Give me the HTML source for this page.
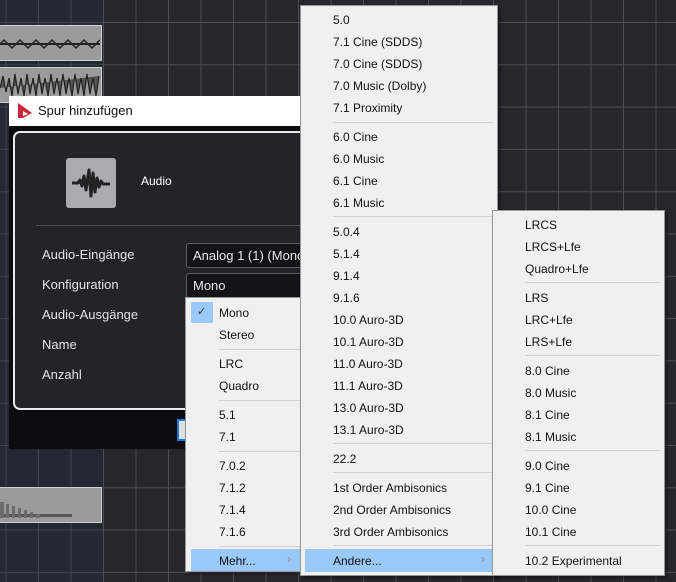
<!DOCTYPE html>
<html><head><meta charset="utf-8"><style>
*{margin:0;padding:0;box-sizing:border-box}
body{width:676px;height:582px;overflow:hidden;position:relative;font-family:"Liberation Sans",sans-serif;font-size:12px;
background-color:#25272b;
background-image:linear-gradient(90deg,#4a4e56 1px,transparent 1px),linear-gradient(180deg,#4a4e56 1px,transparent 1px);
background-size:32.5px 42.3px;background-position:5.5px 22px;}
.lb{position:absolute;left:0;top:0;width:102px;height:582px;background:rgba(30,45,70,.25)}
.clip{position:absolute;left:0;width:102px;height:36px;background:#9b9b9c;border:1px solid #cfcfcf;border-left:none}
.a{position:absolute}
.menu{position:absolute;background:#f0f0f0;border:1px solid #979797;box-shadow:2px 2px 3px rgba(0,0,0,.4);color:#111}
.it{position:absolute;left:0;right:0;height:22px;line-height:22px}
.sep{position:absolute;height:1px;background:#d0d0d0}
.hl{position:absolute;background:#99c9f7}
.lbl{position:absolute;left:42px;color:#e0e4ea;font-size:13px;line-height:16px}
</style></head><body>
<div class="lb"></div>
<div class="clip" style="top:25px"><div class="a" style="left:0;top:17px;width:100px;height:2px;background:#222"></div>
<svg class="a" style="left:0;top:12px" width="100" height="12"><path d="M0 6 L4 2 L8 6 L12 10 L16 6 L20 2 L24 6 L28 10 L32 6 L36 2 L40 6 L44 10 L48 6 L52 2 L56 6 L60 10 L64 6 L68 2 L72 6 L76 10 L80 6 L84 2 L88 6 L92 10 L96 6 L100 2" stroke="#222" fill="none" stroke-width="1.5"/></svg></div>
<div class="clip" style="top:67px"><svg class="a" style="left:0;top:2px" width="100" height="32"><path d="M0 18 L3 6 L6 22 L9 8 L12 26 L15 4 L18 24 L21 8 L24 26 L27 4 L30 24 L33 8 L36 26 L39 4 L42 24 L45 8 L48 26 L51 4 L54 24 L57 8 L60 26 L63 4 L66 24 L69 8 L72 26 L75 4 L78 24 L81 8 L84 26 L87 4 L90 24 L93 8 L96 26 L99 6" stroke="#222" fill="#555" stroke-width="1.2"/></svg></div>
<div class="clip" style="top:487px"><div class="a" style="left:0;top:26px;width:72px;height:3px;background:#555"></div>
<svg class="a" style="left:0;top:10px" width="60" height="20"><path d="M0 20 V4 H4 V20 M6 20 V6 H9 V20 M12 20 V8 H15 V20 M18 20 V10 H21 V20 M24 20 V12 H27 V20 M30 20 V14 H33 V20 M36 20 V16 H40 V20" fill="#6c6c6c"/></svg></div>

<!-- dialog -->
<div class="a" style="left:9px;top:96px;width:300px;height:30px;background:#fff"></div>
<svg class="a" style="left:17px;top:102px" width="16" height="17"><path d="M1 1 L15 11 L6 16 L1 16 Z" fill="#c8263a"/><path d="M6 9 L11 12 L6 14Z" fill="#fff"/></svg>
<div class="a" style="left:38px;top:103px;font-size:13px;color:#111">Spur hinzufügen</div>
<div class="a" style="left:9px;top:126px;width:300px;height:323px;background:#0b0c0e"></div>
<div class="a" style="left:13px;top:131px;width:300px;height:279px;background:#222429;border:2px solid #e9e9e9;border-radius:7px"></div>
<div class="a" style="left:66px;top:158px;width:50px;height:50px;background:#a9abae;border-radius:3px"></div>
<svg class="a" style="left:70px;top:168px" width="42" height="30"><path d="M2 15 H8 L10 12 L12 18 L14 8 L16 22 L19 2 L21 28 L23 5 L25 24 L27 10 L29 19 L31 13 L33 16 H40" stroke="#222" stroke-width="3" fill="none" stroke-linejoin="round"/></svg>
<div class="a" style="left:141px;top:174px;color:#fff;font-size:12px">Audio</div>
<div class="a" style="left:36px;top:225px;width:270px;height:1px;background:#4a4c50"></div>
<div class="lbl" style="top:247px">Audio-Eingänge</div>
<div class="lbl" style="top:277px">Konfiguration</div>
<div class="lbl" style="top:307px">Audio-Ausgänge</div>
<div class="lbl" style="top:337px">Name</div>
<div class="lbl" style="top:367px">Anzahl</div>
<div class="a" style="left:186px;top:243px;width:120px;height:25px;background:#131417;border:1px solid #5a5c60;border-radius:3px;color:#e8e8e8;font-size:13px;line-height:23px;padding-left:6px;white-space:nowrap;overflow:hidden">Analog 1 (1) (Mono</div>
<div class="a" style="left:186px;top:273px;width:120px;height:25px;background:#131417;border:1px solid #5a5c60;border-radius:3px;color:#e8e8e8;font-size:13px;line-height:23px;padding-left:6px">Mono</div>
<div class="a" style="left:177px;top:419px;width:12px;height:22px;border:2px solid #1e78d6;background:#e0e0e0"></div>

<!-- menu 1 -->
<div class="menu" style="left:185px;top:297px;width:116px;height:275px">
<div class="hl" style="left:5px;top:4px;width:22px;height:21px"></div>
<div class="a" style="left:11px;top:7px;font-size:11px;color:#333">✓</div>
<div class="hl" style="left:5px;top:251px;width:110px;height:22px"></div>
<div style="position:absolute;left:33px;top:0;right:0">
<div class="it" style="top:4px">Mono</div><div class="it" style="top:26px">Stereo</div>
<div class="sep" style="top:51px;left:0;width:82px"></div>
<div class="it" style="top:55px">LRC</div><div class="it" style="top:77px">Quadro</div>
<div class="sep" style="top:102px;left:0;width:82px"></div>
<div class="it" style="top:106px">5.1</div><div class="it" style="top:128px">7.1</div>
<div class="sep" style="top:153px;left:0;width:82px"></div>
<div class="it" style="top:157px">7.0.2</div><div class="it" style="top:179px">7.1.2</div><div class="it" style="top:201px">7.1.4</div><div class="it" style="top:223px">7.1.6</div>
<div class="sep" style="top:248px;left:0;width:82px"></div>
<div class="it" style="top:252px">Mehr...</div>
</div>
<div class="a" style="left:101px;top:254px;color:#888">›</div>
</div>

<!-- menu 2 -->
<div class="menu" style="left:300px;top:5px;width:198px;height:571px">
<div class="hl" style="left:4px;top:543px;width:189px;height:23px"></div>
<div style="position:absolute;left:32px;top:0;right:0">
<div class="it" style="top:3px">5.0</div><div class="it" style="top:25px">7.1 Cine (SDDS)</div><div class="it" style="top:47px">7.0 Cine (SDDS)</div><div class="it" style="top:69px">7.0 Music (Dolby)</div><div class="it" style="top:91px">7.1 Proximity</div>
<div class="sep" style="top:116px;left:0;width:160px"></div>
<div class="it" style="top:120px">6.0 Cine</div><div class="it" style="top:142px">6.0 Music</div><div class="it" style="top:164px">6.1 Cine</div><div class="it" style="top:186px">6.1 Music</div>
<div class="sep" style="top:210px;left:0;width:160px"></div>
<div class="it" style="top:215px">5.0.4</div><div class="it" style="top:237px">5.1.4</div><div class="it" style="top:259px">9.1.4</div><div class="it" style="top:281px">9.1.6</div><div class="it" style="top:303px">10.0 Auro-3D</div><div class="it" style="top:325px">10.1 Auro-3D</div><div class="it" style="top:347px">11.0 Auro-3D</div><div class="it" style="top:369px">11.1 Auro-3D</div><div class="it" style="top:391px">13.0 Auro-3D</div><div class="it" style="top:413px">13.1 Auro-3D</div>
<div class="sep" style="top:437px;left:0;width:160px"></div>
<div class="it" style="top:442px">22.2</div>
<div class="sep" style="top:466px;left:0;width:160px"></div>
<div class="it" style="top:471px">1st Order Ambisonics</div><div class="it" style="top:493px">2nd Order Ambisonics</div><div class="it" style="top:515px">3rd Order Ambisonics</div>
<div class="sep" style="top:539px;left:0;width:160px"></div>
<div class="it" style="top:544px">Andere...</div>
</div>
<div class="a" style="left:180px;top:546px;color:#888">›</div>
</div>

<!-- menu 3 -->
<div class="menu" style="left:492px;top:210px;width:173px;height:366px">
<div style="position:absolute;left:32px;top:0;right:0">
<div class="it" style="top:3px">LRCS</div><div class="it" style="top:25px">LRCS+Lfe</div><div class="it" style="top:47px">Quadro+Lfe</div>
<div class="sep" style="top:71px;left:0;width:135px"></div>
<div class="it" style="top:76px">LRS</div><div class="it" style="top:98px">LRC+Lfe</div><div class="it" style="top:120px">LRS+Lfe</div>
<div class="sep" style="top:144px;left:0;width:135px"></div>
<div class="it" style="top:149px">8.0 Cine</div><div class="it" style="top:171px">8.0 Music</div><div class="it" style="top:193px">8.1 Cine</div><div class="it" style="top:215px">8.1 Music</div>
<div class="sep" style="top:239px;left:0;width:135px"></div>
<div class="it" style="top:244px">9.0 Cine</div><div class="it" style="top:266px">9.1 Cine</div><div class="it" style="top:288px">10.0 Cine</div><div class="it" style="top:310px">10.1 Cine</div>
<div class="sep" style="top:334px;left:0;width:135px"></div>
<div class="it" style="top:339px">10.2 Experimental</div>
</div>
</div>
</body></html>
